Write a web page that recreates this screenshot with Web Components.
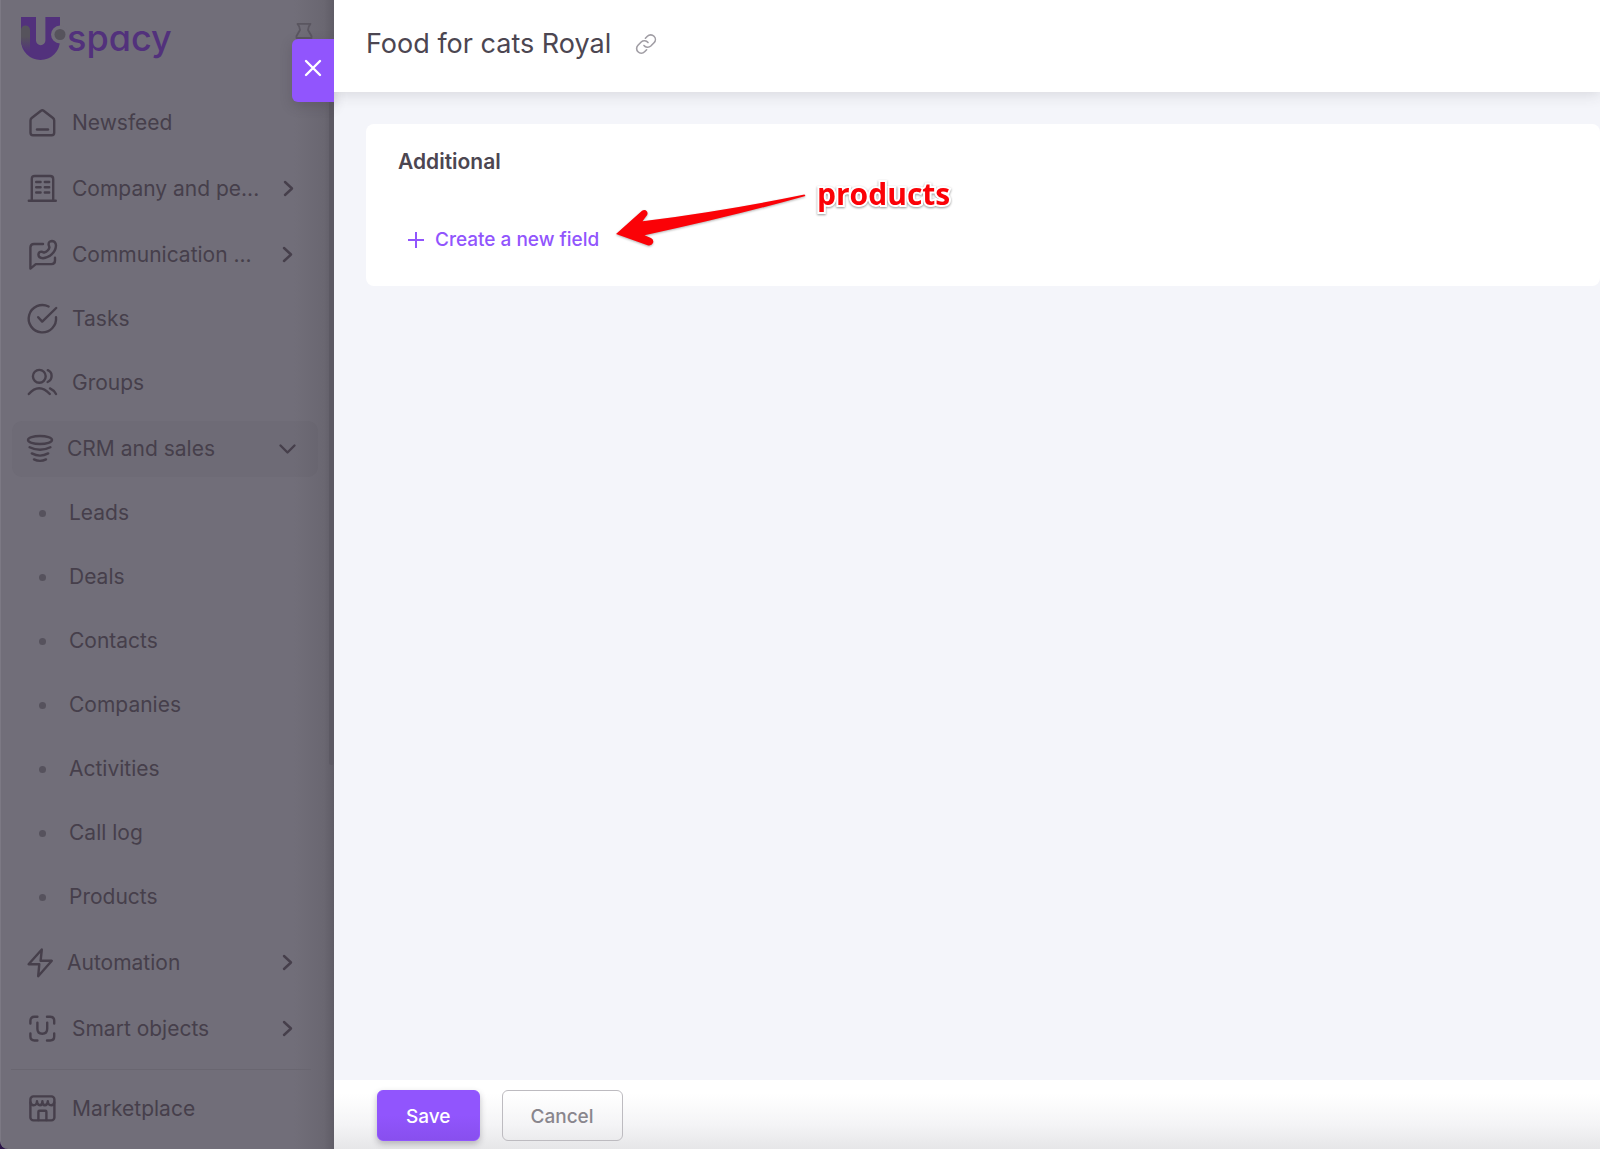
<!DOCTYPE html>
<html lang="en">
<head>
<meta charset="utf-8">
<meta name="viewport" content="width=device-width, initial-scale=1">
<title>Uspacy - Food for cats Royal</title>
<style>
	:root {
		--violet: #9155fd;
		--ink: #4c4651;
		--dim-bg: #716e79;
		--dim-ink: #463f4b;
		--dim-line: #696670;
		--page: #f4f5fa;
	}
	body {
		margin: 0;
		background: #2b1547;
		color: var(--ink);
		font-family: Inter, "Liberation Sans", sans-serif;
	}
</style>
</head>
<body>
<app-shell>
	<side-menu slot="menu">
		<menu-item icon="home">Newsfeed</menu-item>
		<menu-item icon="company" arrow="right">Company and pe...</menu-item>
		<menu-item icon="chat" arrow="right">Communication ...</menu-item>
		<menu-item icon="tasks">Tasks</menu-item>
		<menu-item icon="groups">Groups</menu-item>
		<menu-item icon="crm" arrow="down" narrow active>CRM and sales</menu-item>
		<menu-item>Leads</menu-item>
		<menu-item>Deals</menu-item>
		<menu-item>Contacts</menu-item>
		<menu-item>Companies</menu-item>
		<menu-item>Activities</menu-item>
		<menu-item>Call log</menu-item>
		<menu-item>Products</menu-item>
		<menu-item icon="bolt" arrow="right" narrow>Automation</menu-item>
		<menu-item icon="smart" arrow="right">Smart objects</menu-item>
		<menu-item icon="market" slot="bottom">Marketplace</menu-item>
	</side-menu>
	<product-drawer>
		<span slot="title">Food for cats Royal</span>
		<field-card>
			<span slot="heading">Additional</span>
			Create a new field
			<arrow-note slot="note">products</arrow-note>
		</field-card>
		<action-button slot="actions" primary>Save</action-button>
		<action-button slot="actions">Cancel</action-button>
	</product-drawer>
</app-shell>

<script>
	// Menu icons, drawn in a 30px high box
	const ICONS = {
		home: '<path d="M14 2.8q1.3-1 2.6 0l9.4 7.2q1.2 1 1.2 2.5v12.2q0 2.5-2.5 2.5H6q-2.5 0-2.5-2.5V12.5q0-1.5 1.2-2.5z"/><path d="M10 21.5h11"/>',
		company: '<path d="M1.8 26.7h27M4.8 26.5V5q0-3 3-3h15.4q3 0 3 3v21.5"/><path d="M9.2 8h4.4M17.8 8h4.4M9.2 13.2h4.4M17.8 13.2h4.4M9.2 18.5h4.4M17.8 18.5h4.4"/>',
		chat: '<path d="M16 4H7Q3.4 4 3.4 7.6V28.6L8.8 24.1H24.5Q28 24.1 28 20.6V17.8"/><path d="M22.4 7.4L21.6 4.6Q21.4 1.2 25 1Q28.8 1.4 29 5.6Q28.6 11 24.6 14.4Q20.8 17.8 16 18.2Q11.6 18 11.4 14.6Q11.6 11.6 14.6 11.6L17 12.6Q21.6 10.8 22.4 7.4Z"/>',
		tasks: '<path d="M29 13.2A13.7 13.7 0 1 1 21.6 2.5"/><path d="M11.2 13.2l4 4.4L29.2 4"/>',
		groups: '<circle cx="12.3" cy="8.3" r="6.4"/><path d="M20.8 2.2q3.8 1.6 3.8 5.8 0 4.2-4 6M1.8 26Q12 14.5 22.8 26M23 20.4q3.6 1.6 6 5.6"/>',
		crm: '<ellipse cx="13" cy="6" rx="12" ry="4"/><path d="M2.6 13.2q10.4 5.2 20.8 0M4.8 19.4q8.2 4.4 16.4 0M7 25.4q6 3 12 0"/>',
		bolt: '<path d="M14.8 1.5L1.6 16.2H12.3L11.2 28.2L24.8 12.8H13.6Z"/>',
		smart: '<path d="M3.4 9.5V6.8q0-4 4-4h3M20 2.8h3.2q4 0 4 4v2.7M27.2 19.5v3q0 4-4 4H20M10.4 26.5h-3q-4 0-4-4v-3"/><path d="M10.4 8.6v6.1q0 5 4.9 5t4.9-5V8.6"/>',
		market: '<rect x="3.4" y="2.4" width="24" height="24" rx="3"/><path d="M3.6 8.5q.4 2.8 3 2.8 3.2 0 3.4-4 .2 4 2.9 4 2.5 0 2.5-4 0 4 2.5 4t2.9-4q.2 4 3.4 4 2.6 0 3-2.8"/><path d="M11.4 26v-8.3q0-1 1-1h6q1 0 1 1V26"/>'
	};

	customElements.define('app-shell',
		class extends HTMLElement {
			constructor() {
				super();
				this.attachShadow({ mode: 'open' }).innerHTML = `
        <style>
          :host {
            display: grid;
            grid-template-columns: 334px minmax(0, 1fr);
            min-height: 100vh;
          }
        </style>
        <slot name="menu"></slot>
        <slot></slot>
      `;
			}
		}
	);

	/**
	 * Left menu, dimmed while the drawer is open
	 */
	customElements.define('side-menu',
		class extends HTMLElement {
			constructor() {
				super();
				this.attachShadow({ mode: 'open' }).innerHTML = `
        <style>
          :host {
            display: block;
            position: relative;
            box-sizing: border-box;
            border-left: 1px solid #7c7984;
            border-radius: 0 0 0 8px;
            background: linear-gradient(to left, #5f5c66 0, #6a6771 10px, var(--dim-bg) 40px);
            color: var(--dim-ink);
          }
          header {
            display: flex;
            justify-content: space-between;
            align-items: flex-start;
            height: 95px;
            padding: 16px 21px 0 20px;
            box-sizing: border-box;
          }
          .logo {
            display: flex;
            color: #52317c;
            font-size: 36px;
            line-height: 44px;
            font-weight: 500;
            font-feature-settings: "cv11";
            text-decoration: none;
          }
          .pin {
            padding: 6px 0 0;
            border: 0;
            background: none;
            color: #5a5660;
          }
          svg {
            display: block;
          }
          hr {
            margin: 12px 23px 11px 10px;
            border: 0;
            border-top: 1px solid var(--dim-line);
          }
          .thumb {
            position: absolute;
            top: 92px;
            right: 0;
            width: 5px;
            height: 673px;
            border-radius: 3px;
            background: #5c5963;
          }
        </style>
        <header>
          <a class="logo" href="#">
            <svg width="46" height="44" viewBox="0 0 46 44" aria-hidden="true">
              <defs>
                <linearGradient id="fade" x1="0" y1="0" x2="0" y2="1">
                  <stop offset="0" stop-color="#56535c"/>
                  <stop offset=".4" stop-color="#56535c"/>
                  <stop offset="1" stop-color="#52317c"/>
                </linearGradient>
              </defs>
              <path fill="#52317c" d="M0 1H15V24.5a4.7 4.7 0 0 0 9.4 0V1H39V24.5a19.5 19.5 0 0 1-39 0Z"/>
              <path fill="url(#fade)" d="M0 14a4.5 4.5 0 0 1 9 0V37Q0 33 0 24Z"/>
              <circle cx="39" cy="18.5" r="9" fill="#716e79"/>
              <circle cx="39" cy="18.5" r="5.5" fill="#56535c"/>
            </svg>
            spacy
          </a>
          <button class="pin" aria-label="Pin menu">
            <svg width="18" height="24" viewBox="0 0 18 24" fill="none" stroke="currentColor" stroke-width="1.8" stroke-linejoin="round" stroke-linecap="round">
              <path d="M2.5 1.8H15.500Q13 4.500 13 8L16.500 14V16H1.500V14L5 8Q5 4.500 2.500 1.800ZM9 16V22"/>
            </svg>
          </button>
        </header>
        <nav>
          <slot></slot>
          <hr>
          <slot name="bottom"></slot>
        </nav>
        <div class="thumb"></div>
      `;
			}
		}
	);

	/**
	 * One row of the menu: a link, or a button if it opens a group
	 */
	customElements.define('menu-item',
		class extends HTMLElement {
			constructor() {
				super();
				this.attachShadow({ mode: 'open' });
			}

			connectedCallback() {
				const icon = this.getAttribute('icon');
				const arrow = this.getAttribute('arrow');
				const width = this.hasAttribute('narrow') ? 25 : 30;
				const tag = arrow ? 'button' : 'a';
				const path = arrow === 'down' ? 'M7.5 11.5l7 7 7-7' : 'M11 8l7 6.5-7 6.5';

				const mark = icon
					? `<svg width="${width}" height="30" viewBox="0 0 ${width} 30">${ICONS[icon]}</svg>`
					: '<i></i>';
				const chevron = arrow
					? `<svg class="arrow" width="30" height="30" viewBox="0 0 30 30"><path d="${path}"/></svg>`
					: '';

				this.shadowRoot.innerHTML = `
        <style>
          :host {
            display: block;
            margin: 0 16px 8px 11px;
          }
          :host([arrow]) {
            margin-top: 10px;
          }
          .row {
            display: flex;
            align-items: center;
            gap: 15px;
            box-sizing: border-box;
            width: 100%;
            height: 56px;
            padding: 0 15px;
            border: 0;
            border-radius: 10px;
            background: none;
            color: inherit;
            font: 400 21px/28px Inter, "Liberation Sans", sans-serif;
            text-align: left;
            text-decoration: none;
            white-space: nowrap;
          }
          :host([active]) .row {
            background: rgba(30, 20, 40, 0.03);
          }
          svg {
            flex: none;
            overflow: visible;
            fill: none;
            stroke: currentColor;
            stroke-width: 2.4;
            stroke-linecap: round;
            stroke-linejoin: round;
          }
          .arrow {
            margin-left: auto;
          }
          i {
            width: 7px;
            height: 7px;
            margin: 0 8px 0 12px;
            border-radius: 50%;
            background: #56525d;
          }
        </style>
        <${tag} class="row" ${arrow ? `aria-expanded="${arrow === 'down'}"` : 'href="#"'}>
          ${mark}<span><slot></slot></span>${chevron}
        </${tag}>
      `;
			}
		}
	);

	customElements.define('product-drawer',
		class extends HTMLElement {
			constructor() {
				super();
				this.attachShadow({ mode: 'open' }).innerHTML = `
        <style>
          :host {
            display: flex;
            flex-direction: column;
            position: relative;
            background: var(--page);
          }
          header {
            display: flex;
            align-items: center;
            gap: 23px;
            padding: 28px 32px 32px;
            background: #fff;
            box-shadow: 0 2px 14px rgba(58, 53, 65, 0.16);
            clip-path: inset(0 0 -20px 0);
          }
          h1 {
            margin: 0;
            font-size: 27px;
            line-height: 32px;
            font-weight: 400;
          }
          .link, .close {
            padding: 0;
            border: 0;
            background: none;
          }
          .link {
            color: #a09da4;
          }
          svg {
            display: block;
            fill: none;
            stroke: currentColor;
            stroke-linecap: round;
            stroke-linejoin: round;
          }
          .close {
            position: absolute;
            top: 39px;
            right: 100%;
            display: flex;
            justify-content: center;
            width: 42px;
            height: 63px;
            padding-top: 20px;
            border-radius: 6px 0 0 6px;
            background: var(--violet);
            box-shadow: 0 4px 12px rgba(58, 53, 65, 0.25);
            color: #fff;
          }
          main {
            flex: 1;
            padding: 32px 0 32px 32px;
          }
          footer {
            display: flex;
            gap: 22px;
            padding: 10px 43px 8px;
            background: linear-gradient(#fff 20%, #f4f4f6 65%, #e6e6e8);
          }
        </style>
        <button class="close" aria-label="Close">
          <svg width="18" height="18" viewBox="0 0 18 18" stroke-width="2.4"><path d="M2 2l14 14M16 2L2 16"/></svg>
        </button>
        <header>
          <h1><slot name="title"></slot></h1>
          <button class="link" aria-label="Copy link">
            <svg width="24" height="24" viewBox="0 0 24 24" stroke-width="1.6">
              <path d="M10 13.5a4.6 4.6 0 0 0 6.8.5l3.2-3.2a4.6 4.6 0 0 0-6.6-6.600l-2 2"/>
              <path d="M14 10.5a4.6 4.6 0 0 0-6.8-.5L4 13.2a4.6 4.6 0 0 0 6.6 6.600l2-2"/>
            </svg>
          </button>
        </header>
        <main><slot></slot></main>
        <footer><slot name="actions"></slot></footer>
      `;
			}
		}
	);

	customElements.define('field-card',
		class extends HTMLElement {
			constructor() {
				super();
				this.attachShadow({ mode: 'open' }).innerHTML = `
        <style>
          :host {
            display: block;
            position: relative;
            padding: 24px 32px;
            border-radius: 8px;
            background: #fff;
          }
          h2 {
            margin: 0 0 42px;
            font-size: 21px;
            line-height: 28px;
            font-weight: 600;
          }
          button {
            display: flex;
            align-items: center;
            gap: 11px;
            height: 44px;
            padding: 0 10px;
            border: 0;
            background: none;
            color: var(--violet);
            font: 500 19px/24px Inter, "Liberation Sans", sans-serif;
          }
          svg {
            fill: none;
            stroke: currentColor;
            stroke-width: 2;
          }
        </style>
        <h2><slot name="heading"></slot></h2>
        <button>
          <svg width="16" height="16" viewBox="0 0 16 16" aria-hidden="true"><path d="M8 0v16M0 8h16"/></svg>
          <span><slot></slot></span>
        </button>
        <slot name="note"></slot>
      `;
			}
		}
	);

	/**
	 * Red hand-placed note with an arrow, lies over the card
	 */
	customElements.define('arrow-note',
		class extends HTMLElement {
			constructor() {
				super();
				this.attachShadow({ mode: 'open' }).innerHTML = `
        <style>
          :host {
            position: absolute;
            top: 50px;
            left: 248px;
            display: flex;
            align-items: flex-start;
            gap: 9px;
            color: #fb0207;
            font: 700 30px/40px "Open Sans", "Noto Sans", sans-serif;
          }
          svg {
            margin-top: 18px;
            filter: drop-shadow(0 1px 1px rgba(0, 0, 0, 0.3));
          }
          span {
            -webkit-text-stroke: 4px #fff;
            paint-order: stroke fill;
            filter: drop-shadow(0 1px 1px rgba(0, 0, 0, 0.4));
          }
        </style>
        <svg width="194" height="58" viewBox="0 0 194 58" fill="currentColor" aria-hidden="true">
          <path d="M2 42L28 18.7Q31 17 33 19.5Q34.5 22 32 24.5L28.5 29.3Q110 19 190.5 2.5L191.5 4Q120 24 30.5 43.3L37 46Q40.2 48 39 51Q37.5 54.3 33.5 53.2Z"/>
        </svg>
        <span><slot></slot></span>
      `;
			}
		}
	);

	customElements.define('action-button',
		class extends HTMLElement {
			constructor() {
				super();
				this.attachShadow({ mode: 'open' }).innerHTML = `
        <style>
          :host {
            display: block;
          }
          button {
            height: 51px;
            padding: 2px 28px 0;
            border: 1px solid #bdbbc0;
            border-radius: 6px;
            background: none;
            color: #89868d;
            font: 500 19px/24px Inter, "Liberation Sans", sans-serif;
          }
          :host([primary]) button {
            border-color: var(--violet);
            background: linear-gradient(#9155fd 50%, #884fee);
            box-shadow: 0 3px 6px rgba(58, 53, 65, 0.3);
            color: #fff;
          }
        </style>
        <button><slot></slot></button>
      `;
			}
		}
	);
</script>
</body>
</html>
